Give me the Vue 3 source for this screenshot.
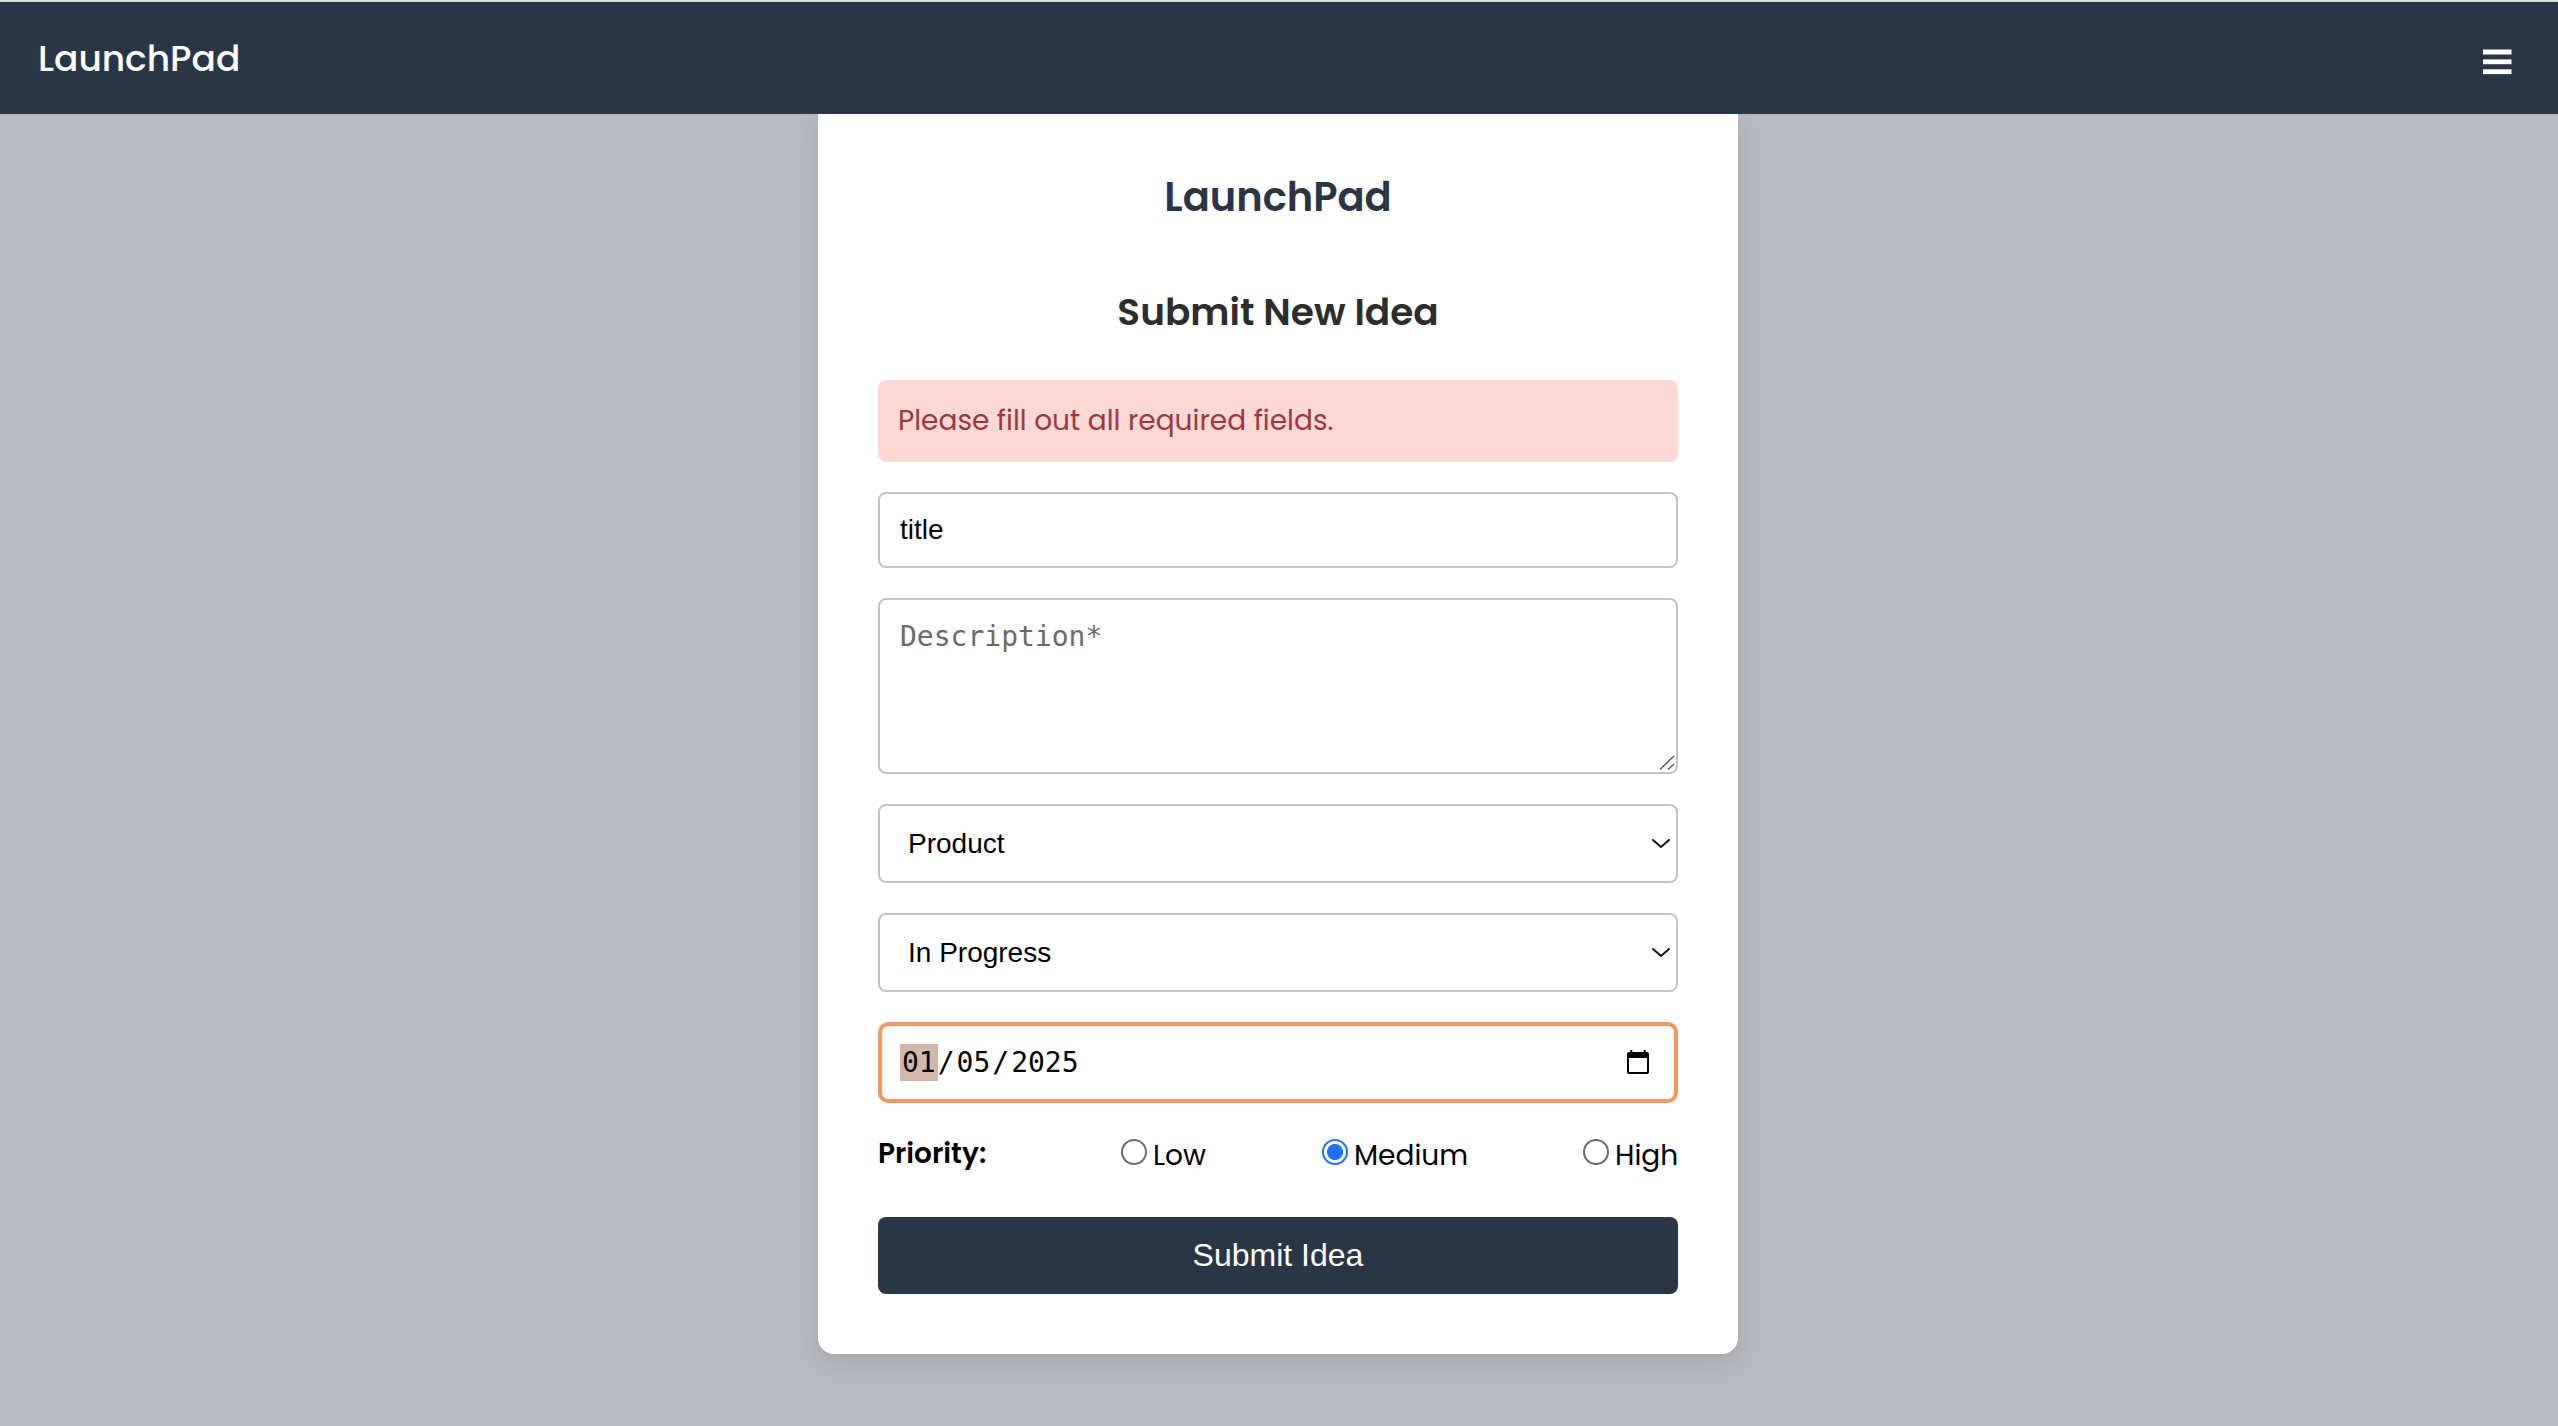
<script setup>
import { ref } from 'vue'

const title = ref('title')
const description = ref('')
const priority = ref('Medium')
const levels = ['Low', 'Medium', 'High']
const selections = ['Product', 'In Progress']
</script>

<template>
  <div class="page">
    <header class="navbar">
      <span class="brand">LaunchPad</span>
      <svg class="menu" width="30" height="26" viewBox="0 0 30 26" fill="#fff">
        <rect x="0" y="0.5" width="28.5" height="5" />
        <rect x="0" y="10.4" width="28.5" height="4.8" />
        <rect x="0" y="20.3" width="28.5" height="4.8" />
      </svg>
    </header>
    <main class="card">
      <h1>LaunchPad</h1>
      <h2>Submit New Idea</h2>
      <div class="alert">Please fill out all required fields.</div>
      <input v-model="title" class="field text" type="text" />
      <div class="area">
        <textarea v-model="description" class="field" placeholder="Description*"></textarea>
        <svg class="grip" width="16" height="16" viewBox="0 0 16 16" fill="none" stroke="#555" stroke-width="1.4">
          <path d="M1 14.5 15 1M9 14.500l6-5.500" />
        </svg>
      </div>
      <div v-for="value in selections" :key="value" class="field select">
        <span>{{ value }}</span>
        <svg width="18" height="10" viewBox="0 0 18 10" fill="none" stroke="#111" stroke-width="2">
          <path d="M1 1l8 7 8-7" stroke-linecap="round" />
        </svg>
      </div>
      <div class="date">
        <span><span class="month">01</span>/<span class="part">05</span>/<span class="part">2025</span></span>
        <svg class="calendar" width="22" height="24" viewBox="0 0 22 24">
          <path fill-rule="evenodd" d="M3.3 0h2v2h11.400V0h2v2H20a2 2 0 0 1 2 2v18a2 2 0 0 1-2 2H2a2 2 0 0 1-2-2V4a2 2 0 0 1 2-2h1.300zM2 8v14h18V8z" />
        </svg>
      </div>
      <div class="priority">
        <strong>Priority:</strong>
        <label v-for="level in levels" :key="level" :class="level.toLowerCase()">
          <input v-model="priority" type="radio" name="priority" :value="level" />
          <span>{{ level }}</span>
        </label>
      </div>
      <button type="button">Submit Idea</button>
    </main>
  </div>
</template>

<style>
body { background: #b7babf; }
</style>

<style scoped>
.page {
  box-sizing: border-box;
  height: 1426px;
  overflow: hidden;
  border-top: 2px solid #dcdcdc;
  background: #b7babf;
  font-family: Poppins, Inter, sans-serif;
  font-size: 28px;
  color: #000;
}
.navbar {
  position: relative;
  z-index: 1;
  display: flex;
  align-items: center;
  justify-content: space-between;
  box-sizing: border-box;
  height: 112px;
  padding: 0 45px 0 38px;
  background: #2a3646;
}
.brand { margin-top: 1px; line-height: 51px; font-size: 36px; font-weight: 500; color: #fff; }
.menu { margin-top: 7px; }
.card {
  display: flex;
  flex-direction: column;
  box-sizing: border-box;
  width: 920px;
  height: 1240px;
  margin-left: 818px;
  padding: 53px 60px 0;
  border-radius: 0 0 16px 16px;
  background: #fff;
  box-shadow: 0 8px 24px rgba(0, 0, 0, 0.1);
}
h1, h2 { margin: 0; line-height: 60px; text-align: center; font-weight: 600; }
h1 { font-size: 40px; color: #2a3646; }
h2 { margin-top: 55px; font-size: 37.44px; color: #2d2d2d; }
.alert {
  box-sizing: border-box;
  height: 82px;
  margin: 38px 0 30px;
  padding-left: 20px;
  border-radius: 8px;
  background: #fed7d7;
  color: #9b3a3c;
  line-height: 82px;
}
.field {
  display: block;
  box-sizing: border-box;
  width: 800px;
  margin: 0;
  border: 2px solid #c4c4c4;
  border-radius: 8px;
  background: #fff;
  outline: none;
  font: 28px "Liberation Sans", Arial, sans-serif;
  color: #000;
}
.text { height: 76px; padding: 0 20px; }
.area { position: relative; height: 176px; margin: 30px 0; }
textarea.field {
  height: 176px;
  padding: 20px;
  resize: none;
  font: 28px/33px "DejaVu Sans Mono", monospace;
}
textarea::placeholder { color: #6b6b6b; opacity: 1; }
.grip { position: absolute; right: 3px; bottom: 3px; }
.select {
  display: flex;
  align-items: center;
  justify-content: space-between;
  height: 79px;
  margin-bottom: 30px;
  padding: 0 6px 0 28px;
}
.date {
  display: flex;
  align-items: center;
  justify-content: space-between;
  box-sizing: border-box;
  height: 81px;
  padding: 0 25px 0 18px;
  border: 4px solid #f09866;
  border-radius: 10px;
  font: 28px/37px "DejaVu Sans Mono", monospace;
}
.calendar { margin-bottom: 1px; }
.month { display: inline-block; padding: 0 2px; background: #d4b7aa; }
.part { padding: 0 2px; }
.priority { display: flex; height: 44px; margin: 29px 0 41px; line-height: 44px; }
strong { flex: none; width: 243px; font-weight: 600; }
label { display: flex; flex: none; margin-top: 2px; }
.low { width: 201px; }
.medium { width: 261px; }
label input {
  box-sizing: border-box;
  width: 26px;
  height: 26px;
  margin: 5px 6px 0 0;
  border: 2px solid #6b6b6b;
  border-radius: 50%;
  appearance: none;
}
label input:checked {
  border-color: #2170ff;
  background: radial-gradient(circle, #2170ff 7.6px, #fff 8.4px);
}
button {
  height: 77px;
  border: 0;
  border-radius: 8px;
  background: #2a3646;
  font: 32px "Liberation Sans", Arial, sans-serif;
  color: #fff;
}
</style>
